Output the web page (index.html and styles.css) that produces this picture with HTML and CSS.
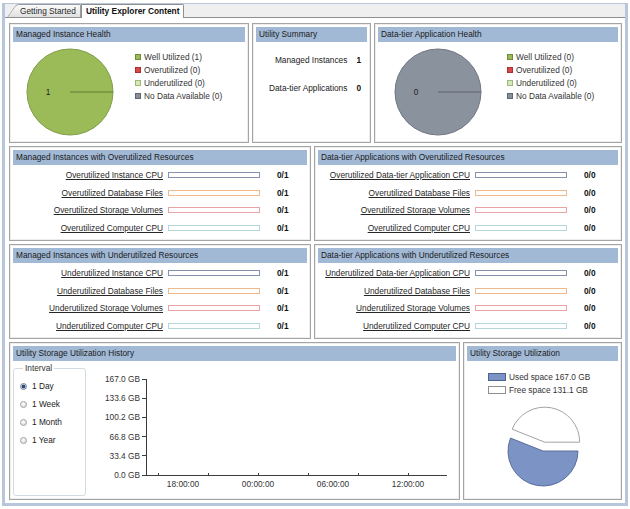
FILE: index.html
```html
<!DOCTYPE html>
<html>
<head>
<meta charset="utf-8">
<link rel="stylesheet" href="styles.css">
</head>
<body>
<div class="frame">
  <div class="tabstrip">
    <div class="tab tab-inactive"><span>Getting Started</span></div>
    <div class="tab tab-active">Utility Explorer Content</div>
  </div>
  <div class="content">
    <div class="row row1">
      <section class="panel">
        <div class="phead">Managed Instance Health</div>
        <div class="health">
          <svg class="pie" width="88" height="88" viewBox="0 0 88 88">
            <circle cx="44" cy="44" r="43" fill="#9bbb59" stroke="#7f9c48" stroke-width="1"/>
            <line x1="44" y1="44" x2="87" y2="44" stroke="#5f7d30" stroke-width="1"/>
            <text class="pie-label" x="22" y="44">1</text>
          </svg>
          <ul class="legend">
            <li><span class="sw sw-well"></span>Well Utilized (1)</li>
            <li><span class="sw sw-over"></span>Overutilized (0)</li>
            <li><span class="sw sw-under"></span>Underutilized (0)</li>
            <li><span class="sw sw-nodata"></span>No Data Available (0)</li>
          </ul>
        </div>
      </section>
      <section class="panel">
        <div class="phead">Utility Summary</div>
        <div class="summary">
          <span>Managed Instances</span><b>1</b>
          <span>Data-tier Applications</span><b>0</b>
        </div>
      </section>
      <section class="panel dt">
        <div class="phead">Data-tier Application Health</div>
        <div class="health">
          <svg class="pie" width="88" height="88" viewBox="0 0 88 88">
            <circle cx="44" cy="44" r="43" fill="#8a929e" stroke="#6f7682" stroke-width="1"/>
            <line x1="44" y1="44" x2="87" y2="44" stroke="#5d636d" stroke-width="1"/>
            <text class="pie-label" x="22" y="44">0</text>
          </svg>
          <ul class="legend">
            <li><span class="sw sw-well"></span>Well Utilized (0)</li>
            <li><span class="sw sw-over"></span>Overutilized (0)</li>
            <li><span class="sw sw-under"></span>Underutilized (0)</li>
            <li><span class="sw sw-nodata"></span>No Data Available (0)</li>
          </ul>
        </div>
      </section>
    </div>

    <div class="row row2">
      <section class="panel">
        <div class="phead">Managed Instances with Overutilized Resources</div>
        <div class="res">
          <div class="rrow"><span class="rlabel">Overutilized Instance CPU</span><span class="bar bar-cpu"></span><b class="val">0/1</b></div>
          <div class="rrow"><span class="rlabel">Overutilized Database Files</span><span class="bar bar-db"></span><b class="val">0/1</b></div>
          <div class="rrow"><span class="rlabel">Overutilized Storage Volumes</span><span class="bar bar-vol"></span><b class="val">0/1</b></div>
          <div class="rrow"><span class="rlabel">Overutilized Computer CPU</span><span class="bar bar-comp"></span><b class="val">0/1</b></div>
        </div>
      </section>
      <section class="panel wide">
        <div class="phead">Data-tier Applications with Overutilized Resources</div>
        <div class="res">
          <div class="rrow"><span class="rlabel">Overutilized Data-tier Application CPU</span><span class="bar bar-cpu"></span><b class="val">0/0</b></div>
          <div class="rrow"><span class="rlabel">Overutilized Database Files</span><span class="bar bar-db"></span><b class="val">0/0</b></div>
          <div class="rrow"><span class="rlabel">Overutilized Storage Volumes</span><span class="bar bar-vol"></span><b class="val">0/0</b></div>
          <div class="rrow"><span class="rlabel">Overutilized Computer CPU</span><span class="bar bar-comp"></span><b class="val">0/0</b></div>
        </div>
      </section>
    </div>

    <div class="row row2">
      <section class="panel">
        <div class="phead">Managed Instances with Underutilized Resources</div>
        <div class="res">
          <div class="rrow"><span class="rlabel">Underutilized Instance CPU</span><span class="bar bar-cpu"></span><b class="val">0/1</b></div>
          <div class="rrow"><span class="rlabel">Underutilized Database Files</span><span class="bar bar-db"></span><b class="val">0/1</b></div>
          <div class="rrow"><span class="rlabel">Underutilized Storage Volumes</span><span class="bar bar-vol"></span><b class="val">0/1</b></div>
          <div class="rrow"><span class="rlabel">Underutilized Computer CPU</span><span class="bar bar-comp"></span><b class="val">0/1</b></div>
        </div>
      </section>
      <section class="panel wide">
        <div class="phead">Data-tier Applications with Underutilized Resources</div>
        <div class="res">
          <div class="rrow"><span class="rlabel">Underutilized Data-tier Application CPU</span><span class="bar bar-cpu"></span><b class="val">0/0</b></div>
          <div class="rrow"><span class="rlabel">Underutilized Database Files</span><span class="bar bar-db"></span><b class="val">0/0</b></div>
          <div class="rrow"><span class="rlabel">Underutilized Storage Volumes</span><span class="bar bar-vol"></span><b class="val">0/0</b></div>
          <div class="rrow"><span class="rlabel">Underutilized Computer CPU</span><span class="bar bar-comp"></span><b class="val">0/0</b></div>
        </div>
      </section>
    </div>

    <div class="row row4">
      <section class="panel">
        <div class="phead">Utility Storage Utilization History</div>
        <div class="hist">
          <fieldset class="interval">
            <legend>Interval</legend>
            <div class="opt"><span class="radio on"></span>1 Day</div>
            <div class="opt"><span class="radio"></span>1 Week</div>
            <div class="opt"><span class="radio"></span>1 Month</div>
            <div class="opt"><span class="radio"></span>1 Year</div>
          </fieldset>
          <svg class="chart" width="364" height="132" viewBox="0 0 364 132">
            <g class="ylab">
              <text x="50" y="15">167.0 GB</text>
              <text x="50" y="34.2">133.6 GB</text>
              <text x="50" y="53.4">100.2 GB</text>
              <text x="50" y="72.6">66.8 GB</text>
              <text x="50" y="91.8">33.4 GB</text>
              <text x="50" y="111">0.0 GB</text>
            </g>
            <g stroke="#3c3c3c" stroke-width="1">
              <line x1="52" y1="15.5" x2="56" y2="15.5"/>
              <line x1="52" y1="34.5" x2="56" y2="34.5"/>
              <line x1="52" y1="53.5" x2="56" y2="53.5"/>
              <line x1="52" y1="72.5" x2="56" y2="72.5"/>
              <line x1="52" y1="91.5" x2="56" y2="91.5"/>
              <line x1="56.5" y1="15" x2="56.5" y2="111.5"/>
              <line x1="52" y1="111.5" x2="357" y2="111.5"/>
              <line x1="68.5" y1="109" x2="68.5" y2="111"/>
              <line x1="118.5" y1="109" x2="118.5" y2="111"/>
              <line x1="168.5" y1="109" x2="168.5" y2="111"/>
              <line x1="218.5" y1="109" x2="218.5" y2="111"/>
              <line x1="268.5" y1="109" x2="268.5" y2="111"/>
              <line x1="318.5" y1="109" x2="318.5" y2="111"/>
            </g>
            <g class="xlab">
              <text x="93" y="120">18:00:00</text>
              <text x="168" y="120">00:00:00</text>
              <text x="243" y="120">06:00:00</text>
              <text x="318" y="120">12:00:00</text>
            </g>
          </svg>
        </div>
      </section>
      <section class="panel">
        <div class="phead">Utility Storage Utilization</div>
        <div class="stor">
          <ul class="stor-legend">
            <li><span class="swr swr-used"></span>Used space 167.0 GB</li>
            <li><span class="swr swr-free"></span>Free space 131.1 GB</li>
          </ul>
          <svg class="spie" width="100" height="88" viewBox="0 0 100 88">
            <path d="M50,48 L85,48 A35,35 0 1 1 17.48,35.06 Z" fill="#7b93c5" stroke="#5a6e9b" stroke-width="1"/>
            <path d="M51.7,39.16 L19.18,26.22 A35,35 0 0 1 86.7,39.16 Z" fill="#ffffff" stroke="#a3a3a3" stroke-width="1"/>
          </svg>
        </div>
      </section>
    </div>
  </div>
</div>
</body>
</html>
```
FILE: styles.css
```css
* { box-sizing: border-box; }
html, body { margin: 0; padding: 0; }
body {
  width: 630px;
  height: 509px;
  overflow: hidden;
  background: #ffffff;
  font-family: "Liberation Sans", Arial, sans-serif;
  font-size: 8.3px;
  color: #222222;
}

.frame {
  width: 626px;
  margin: 3px 2px 0 2px;
  border: 3px solid #b7c6da;
  border-top: 1px solid #b7c6da;
}

.tabstrip {
  height: 13px;
  background: #efefef;
  display: flex;
  align-items: flex-end;
  padding-left: 2px;
}
.tab { white-space: nowrap; }
.tab-inactive {
  position: relative;
  width: 74px;
  height: 12px;
  line-height: 12px;
  padding-left: 13px;
  color: #2a2a2a;
}
.tab-inactive::before {
  content: "";
  position: absolute;
  left: 0;
  bottom: 0;
  width: 16px;
  height: 12px;
  background: linear-gradient(#fbfbfb, #e0e0e0);
  border-left: 1px solid #9a9a9a;
  border-top: 1px solid #9a9a9a;
  border-top-left-radius: 3px;
  transform: skewX(-35deg);
  transform-origin: bottom left;
}
.tab-inactive::after {
  content: "";
  position: absolute;
  left: 12px;
  right: 0;
  bottom: 0;
  height: 12px;
  background: linear-gradient(#fbfbfb, #e0e0e0);
  border-top: 1px solid #9a9a9a;
  border-right: 1px solid #9a9a9a;
  border-top-right-radius: 2px;
}
.tab-inactive span { position: relative; z-index: 1; }
.tab-active {
  position: relative;
  z-index: 2;
  width: 103px;
  height: 14px;
  line-height: 13px;
  margin-bottom: -1px;
  padding: 0 3px 0 4px;
  background: #ffffff;
  border: 1px solid #8f8f8f;
  border-bottom: none;
  border-top-right-radius: 2px;
  font-weight: bold;
  font-size: 8.4px;
  color: #111;
}

.content {
  border-top: 1px solid #8f8f8f;
  background: #ffffff;
  padding: 5px 3px 3px 4px;
  display: flex;
  flex-direction: column;
  gap: 3px;
}
.row { display: grid; gap: 3px; }
.row1 { grid-template-columns: 240px 119px 248px; height: 120px; }
.row2 { grid-template-columns: 302px 308px; height: 95px; }
.row4 { grid-template-columns: 451px 159px; height: 158px; }

.panel {
  min-width: 0;
  overflow: hidden;
  display: flex;
  flex-direction: column;
  border: 1px solid #a4a4a4;
  box-shadow: inset 0 0 0 1px #ededed;
  padding: 3px;
  background: #ffffff;
}
.phead {
  flex: none;
  height: 15px;
  line-height: 15px;
  padding-left: 3px;
  background: #a2b9d6;
  color: #1a1a1a;
  white-space: nowrap;
}

/* health panels */
.health { display: flex; align-items: flex-start; }
.health .pie { flex: none; margin: 6px 0 0 13px; }
.health .legend { margin: 8px 0 0 21px; }
.dt .health .pie { margin-left: 16px; }
.dt .health .legend { margin-left: 25px; }
.pie-label {
  font-family: "Liberation Sans", Arial, sans-serif;
  font-size: 8.3px;
  fill: #222;
  text-anchor: middle;
  dominant-baseline: central;
}
.legend { list-style: none; padding: 0; color: #333; }
.legend li { display: flex; align-items: center; height: 13px; white-space: nowrap; }
.sw { width: 6px; height: 6px; border: 1px solid; margin-right: 3px; flex: none; }
.sw-well { background: #9bbb59; border-color: #6f8b3a; }
.sw-over { background: #d8484a; border-color: #a83032; }
.sw-under { background: #d7e9b8; border-color: #9fb87a; }
.sw-nodata { background: #868e9a; border-color: #5f6672; }

/* summary */
.summary {
  display: grid;
  grid-template-columns: 1fr auto;
  column-gap: 9px;
  row-gap: 16px;
  padding: 12px 6px 0 0;
  line-height: 12px;
  text-align: right;
  white-space: nowrap;
}
.summary b { color: #111; }

/* resource rows */
.res { padding-top: 1px; }
.rrow { display: flex; align-items: center; height: 17.7px; }
.rlabel {
  flex: none;
  width: 150px;
  display: flex;
  justify-content: flex-end;
  white-space: nowrap;
  text-decoration: underline;
  color: #262626;
}
.wide .rlabel { width: 152px; }
.bar { flex: none; width: 92px; height: 6px; margin-left: 5px; border: 1px solid; background: #fff; }
.bar-cpu { border-color: #8691ad; }
.bar-db { border-color: #efb98b; }
.bar-vol { border-color: #eaa3a6; }
.bar-comp { border-color: #b4d7dc; }
.val { margin-left: 17px; color: #111; }

/* history */
.hist { display: flex; align-items: flex-start; }
.interval {
  flex: none;
  width: 73px;
  height: 133px;
  margin: 2px 0 0 0;
  padding: 4px 0 0 6px;
  border: 1px solid #d3dbe2;
  border-radius: 3px;
}
.interval legend {
  padding: 0 2px;
  margin-left: 3px;
  line-height: 10px;
  color: #333;
}
.opt { display: flex; align-items: center; height: 18px; color: #222; }
.radio {
  flex: none;
  width: 7px;
  height: 7px;
  margin-right: 5px;
  border-radius: 50%;
  border: 1px solid #a0a0a0;
  background: radial-gradient(circle at 40% 35%, #ffffff, #d2d2d2);
}
.radio.on {
  border-color: #7a8699;
  background: radial-gradient(circle, #2c4a7c 0, #2c4a7c 1.5px, #c9d3e2 2.2px);
}
.chart { flex: none; margin: 3px 0 0 4px; }
.chart text {
  font-family: "Liberation Sans", Arial, sans-serif;
  font-size: 8.3px;
  fill: #333;
  dominant-baseline: central;
}
.ylab text { text-anchor: end; }
.xlab text { text-anchor: middle; }

/* storage utilization */
.stor { display: flex; flex-direction: column; }
.stor-legend { list-style: none; margin: 10px 0 0 21px; padding: 0; color: #333; }
.stor-legend li { display: flex; align-items: center; height: 12.5px; white-space: nowrap; }
.swr { flex: none; width: 18px; height: 8px; border: 1px solid; margin-right: 3px; }
.swr-used { background: #7b93c5; border-color: #4e6290; }
.swr-free { background: #ffffff; border-color: #8e8e8e; }
.spie { flex: none; margin: 7px 0 0 26px; }
```
